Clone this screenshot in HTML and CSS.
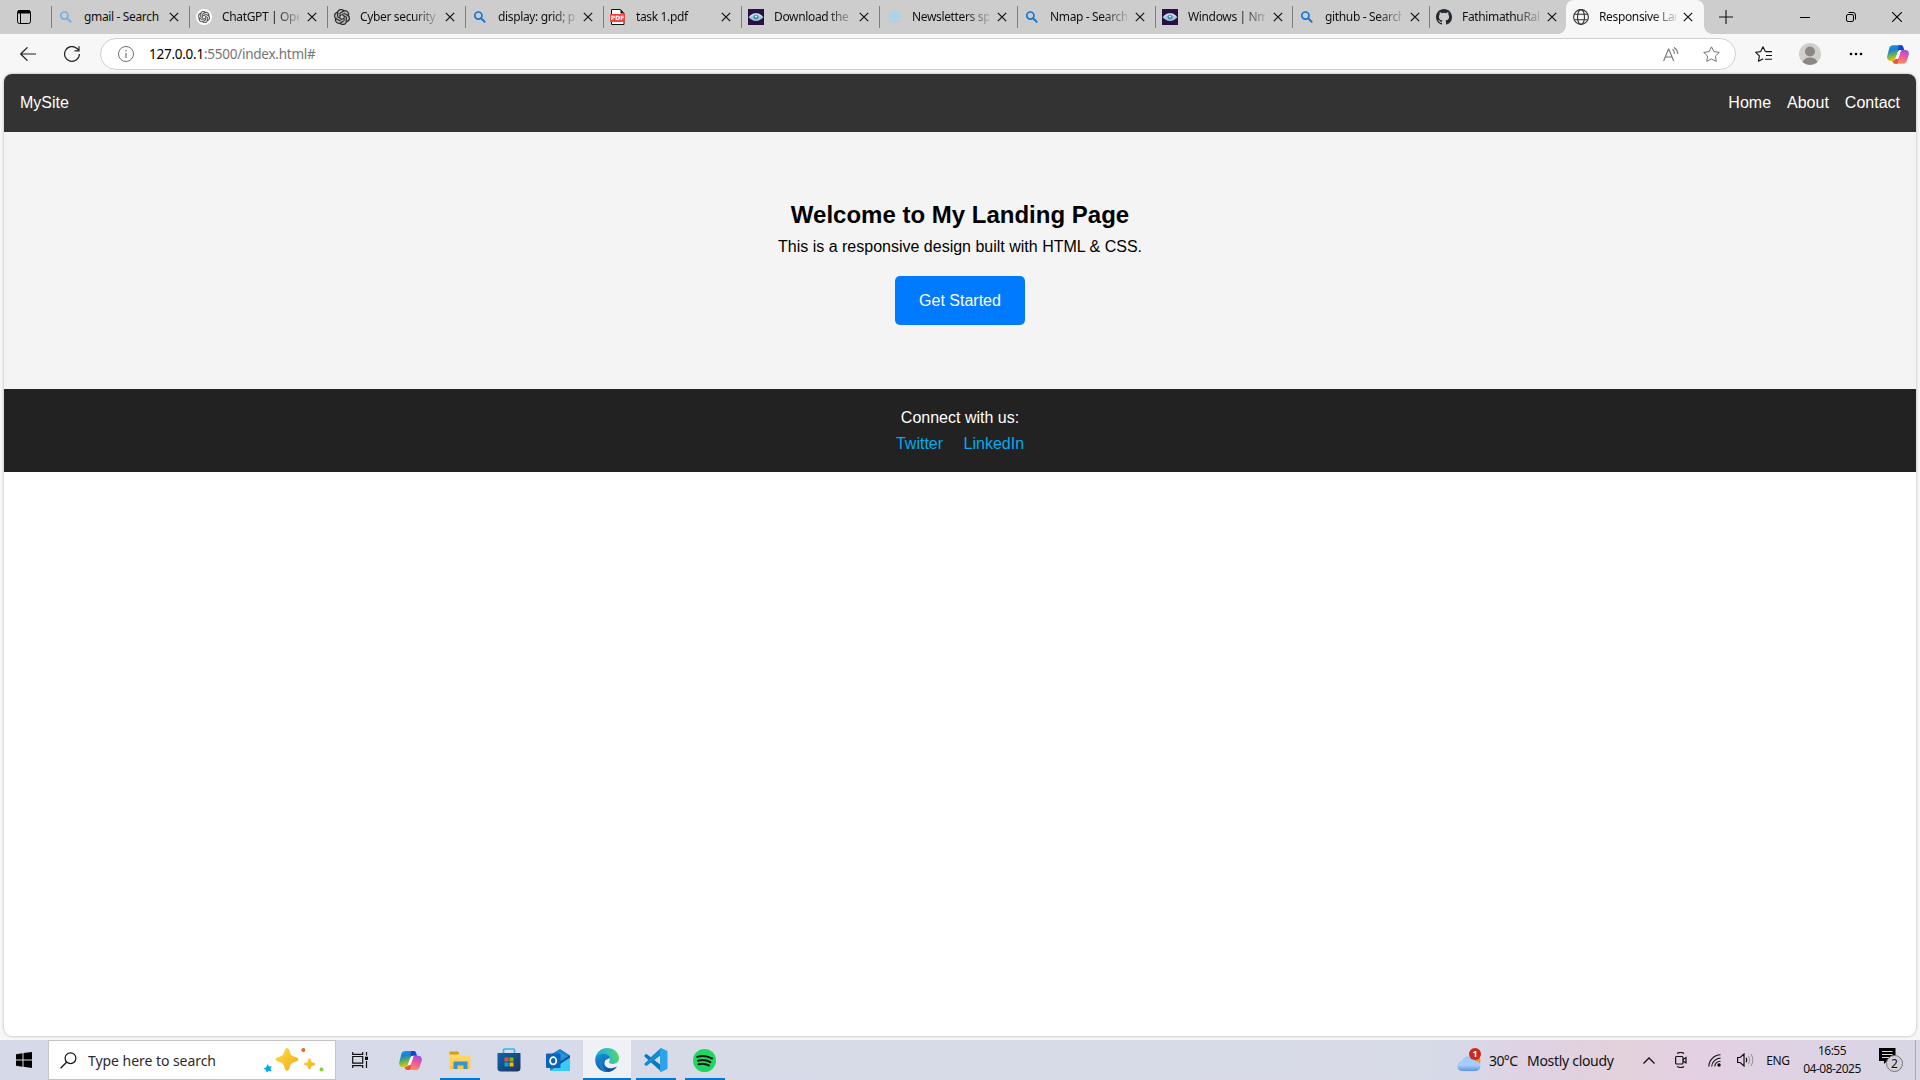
FILE: index.html
```html
<!DOCTYPE html>
<html lang="en">
<head>
<meta charset="utf-8">
<title>Responsive Landing Page</title>
<link rel="stylesheet" href="styles.css">
</head>
<body>
<svg class="defs" aria-hidden="true">
  <defs>
    <linearGradient id="cpA" x1="0" y1="0" x2=".3" y2="1"><stop offset="0" stop-color="#1b9df0"/><stop offset=".35" stop-color="#1a7fd0"/><stop offset=".65" stop-color="#5fb15a"/><stop offset="1" stop-color="#f2c800"/></linearGradient>
    <linearGradient id="cpB" x1=".7" y1="0" x2=".3" y2="1"><stop offset="0" stop-color="#a44bea"/><stop offset=".45" stop-color="#ee5a97"/><stop offset="1" stop-color="#ff9a50"/></linearGradient>
    <linearGradient id="fold" x1="0" y1="0" x2="0" y2="1"><stop offset="0" stop-color="#ffdc72"/><stop offset="1" stop-color="#fbc740"/></linearGradient>
    <linearGradient id="store" x1="0" y1="0" x2="1" y2="1"><stop offset="0" stop-color="#0d65b0"/><stop offset="1" stop-color="#1f3457"/></linearGradient>
    <linearGradient id="edgeA" x1="0" y1=".5" x2="1" y2=".3"><stop offset="0" stop-color="#22a5dc"/><stop offset=".6" stop-color="#35c3b5"/><stop offset="1" stop-color="#60d858"/></linearGradient>
    <linearGradient id="edgeB" x1="0" y1="0" x2=".6" y2="1"><stop offset="0" stop-color="#1b94dc"/><stop offset="1" stop-color="#0c51a0"/></linearGradient>
    <linearGradient id="cloud" x1="0" y1="0" x2="0" y2="1"><stop offset="0" stop-color="#9fc8fa"/><stop offset=".6" stop-color="#a9cefb"/><stop offset="1" stop-color="#5c94e6"/></linearGradient>
    <linearGradient id="gold" x1="0" y1="0" x2="1" y2="1"><stop offset="0" stop-color="#ffdc45"/><stop offset="1" stop-color="#f3ab16"/></linearGradient>
  </defs>
  <symbol id="search" viewBox="0 0 16 16"><circle cx="6.4" cy="6.6" r="3.6" fill="none" stroke="currentColor" stroke-width="1.7"/><path d="M9.2 9.4 12.6 12.8" stroke="currentColor" stroke-width="2" stroke-linecap="round"/></symbol>
  <symbol id="knot" viewBox="0 0 24 24"><path fill="currentColor" stroke="currentColor" stroke-width=".5" d="M22.2819 9.8211a5.9847 5.9847 0 0 0-.5157-4.9108 6.0462 6.0462 0 0 0-6.5098-2.9A6.0651 6.0651 0 0 0 4.9807 4.1818a5.9847 5.9847 0 0 0-3.9977 2.9 6.0462 6.0462 0 0 0 .7427 7.0966 5.98 5.98 0 0 0 .511 4.9107 6.051 6.051 0 0 0 6.5146 2.9001A5.9847 5.9847 0 0 0 13.2599 24a6.0557 6.0557 0 0 0 5.7718-4.2058 5.9894 5.9894 0 0 0 3.9977-2.9001 6.0557 6.0557 0 0 0-.7475-7.0729zm-9.022 12.6081a4.4755 4.4755 0 0 1-2.8764-1.0408l.1419-.0804 4.7783-2.7582a.7948.7948 0 0 0 .3927-.6813v-6.7369l2.02 1.1686a.071.071 0 0 1 .038.052v5.5826a4.504 4.504 0 0 1-4.4945 4.4944zm-9.6607-4.1254a4.4708 4.4708 0 0 1-.5346-3.0137l.142.0852 4.783 2.7582a.7712.7712 0 0 0 .7806 0l5.8428-3.3685v2.3324a.0804.0804 0 0 1-.0332.0615L9.74 19.9502a4.4992 4.4992 0 0 1-6.1408-1.6464zM2.3408 7.8956a4.485 4.485 0 0 1 2.3655-1.9728V11.6a.7664.7664 0 0 0 .3879.6765l5.8144 3.3543-2.0201 1.1685a.0757.0757 0 0 1-.071 0l-4.8303-2.7865A4.504 4.504 0 0 1 2.3408 7.872zm16.5963 3.8558L13.1038 8.364 15.1192 7.2a.0757.0757 0 0 1 .071 0l4.8303 2.7913a4.4944 4.4944 0 0 1-.6765 8.1042v-5.6772a.79.79 0 0 0-.407-.667zm2.0107-3.0231l-.142-.0852-4.7735-2.7818a.7759.7759 0 0 0-.7854 0L9.409 9.2297V6.8974a.0662.0662 0 0 1 .0284-.0615l4.8303-2.7866a4.4992 4.4992 0 0 1 6.6802 4.66zM8.3065 12.863l-2.02-1.1638a.0804.0804 0 0 1-.038-.0567V6.0742a4.4992 4.4992 0 0 1 7.3757-3.4537l-.142.0805L8.704 5.459a.7948.7948 0 0 0-.3927.6813zm1.0976-2.3654l2.602-1.4998 2.6069 1.4998v2.9994l-2.5974 1.4997-2.6067-1.4997Z"/></symbol>
  <symbol id="eye" viewBox="0 0 16 16"><path d="M0 0h16v16H0z" fill="#2a0f45"/><path d="M.5 8.300Q4 4 8 4t7.500 4.300Q12 12 8 12T.5 8.300z" fill="#9cc8da"/><path d="M2 7.500Q8 3 14 7.500" fill="none" stroke="#d6eef5"/><circle cx="8" cy="8" r="2.500" fill="#4b8aa4"/><circle cx="8" cy="7.600" r="1" fill="#e5f7fb"/></symbol>
  <symbol id="wheel" viewBox="0 0 16 16"><g fill="none" stroke="#a4d2ee" stroke-width="1.100"><circle cx="8" cy="8" r="5"/><circle cx="8" cy="8" r="1.800"/><path d="M8 .5v15M.5 8h15M2.700 2.700l10.600 10.600M13.300 2.700 2.700 13.300"/></g></symbol>
  <symbol id="github" viewBox="0 0 16 16"><path fill="#24292f" d="M8 0C3.58 0 0 3.58 0 8c0 3.54 2.29 6.53 5.47 7.59.4.07.55-.17.55-.38 0-.19-.01-.82-.01-1.49-2.01.37-2.53-.49-2.69-.94-.09-.23-.48-.94-.82-1.13-.28-.15-.68-.52-.01-.53.63-.01 1.08.58 1.23.82.72 1.21 1.87.87 2.33.66.07-.52.28-.87.51-1.07-1.78-.2-3.64-.89-3.64-3.95 0-.87.31-1.59.82-2.15-.08-.2-.36-1.02.08-2.12 0 0 .67-.21 2.2.82a7.6 7.6 0 0 1 4 0c1.53-1.04 2.2-.82 2.2-.82.44 1.1.16 1.92.08 2.12.51.56.82 1.27.82 2.15 0 3.07-1.87 3.75-3.65 3.95.29.25.54.73.54 1.48 0 1.07-.01 1.93-.01 2.2 0 .21.15.46.55.38A8.01 8.01 0 0 0 16 8c0-4.42-3.58-8-8-8z"/></symbol>
  <symbol id="globe" viewBox="0 0 16 16"><g fill="none" stroke="#333" stroke-width="1.1"><circle cx="8" cy="8" r="7.4"/><ellipse cx="8" cy="8" rx="3.5" ry="7.4"/><path d="M1.2 5.3h13.6M1.2 10.7h13.6"/></g></symbol>
  <symbol id="x" viewBox="0 0 10 10"><path d="M.8.8l8.400 8.400M9.200.8.8 9.200" stroke="#111" stroke-width="1.200"/></symbol>
  <symbol id="copilot" viewBox="0 0 24 22">
    <path d="M6.500 1h8.800c1.400 0 2 .9 2.400 2l1 3h-3.900c-1.600 0-2.400.7-3 2.400L9 16c-.6 1.500-1.400 2-2.800 2H4c-2.800 0-4.300-2-3.800-5L2.500 4C3.100 2 4.400 1 6.500 1z" fill="url(#cpA)"/>
    <path d="M12.500 1h2.800c1.400 0 2 .9 2.400 2l1 3h-3.900c-1.600 0-2.400.7-3 2.400z" fill="#1148c4"/>
    <path d="M17.500 21H8.700c-1.400 0-2-.9-2.400-2l-.5-1c2 0 3-.5 3.500-2h1c1 0 2-.8 2.500-2.400L15.300 6H20c2.800 0 4.300 2 3.800 5l-2.300 7c-.6 2-1.900 3-4 3z" fill="url(#cpB)"/>
    <path d="M11.500 21H8.700c-1.400 0-2-.9-2.400-2l-.5-1c2 0 3-.5 3.500-2h3.700z" fill="#ee5340"/>
    <path d="M11.800 8.400c.6-1.700 1.400-2.400 3-2.400h.5l-2.500 7.600c-.5 1.600-1.500 2.400-2.500 2.400H9z" fill="#fff" fill-opacity=".9"/>
  </symbol>
</svg>

<div class="browser">
  <div class="tabbar">
    <div class="workspace"><svg width="14" height="14" viewBox="0 0 14 14"><rect x=".5" y=".5" width="13" height="13" rx="2" fill="none" stroke="#000"/><path d="M1 .5h12v3H1z"/><path d="M3.500 3v10.500" stroke="#000"/></svg></div>
    <div class="tab"><svg class="fav pale"><use href="#search"/></svg><span class="title">gmail - Search</span><svg class="close"><use href="#x"/></svg></div>
    <div class="tab"><span class="fav disc"><svg width="12" height="12"><use href="#knot"/></svg></span><span class="title">ChatGPT | OpenAI</span><svg class="close"><use href="#x"/></svg></div>
    <div class="tab"><svg class="fav dark"><use href="#knot"/></svg><span class="title">Cyber security</span><svg class="close"><use href="#x"/></svg></div>
    <div class="tab"><svg class="fav blue"><use href="#search"/></svg><span class="title">display: grid; place</span><svg class="close"><use href="#x"/></svg></div>
    <div class="tab"><svg class="fav" viewBox="0 0 16 16"><path d="M1.500.5h9l3.500 4v11H1.500z" fill="#fff" stroke="#111"/><path d="M10.500.5v4H14z" fill="#111"/><path d="M0 5h15v8H0z" fill="#f8403f"/><text x="7.500" y="11.200" text-anchor="middle" class="pdf-text">PDF</text></svg><span class="title">task 1.pdf</span><svg class="close"><use href="#x"/></svg></div>
    <div class="tab"><svg class="fav"><use href="#eye"/></svg><span class="title">Download the F</span><svg class="close"><use href="#x"/></svg></div>
    <div class="tab"><svg class="fav"><use href="#wheel"/></svg><span class="title">Newsletters spam</span><svg class="close"><use href="#x"/></svg></div>
    <div class="tab"><svg class="fav blue"><use href="#search"/></svg><span class="title">Nmap - Search</span><svg class="close"><use href="#x"/></svg></div>
    <div class="tab narrow"><svg class="fav"><use href="#eye"/></svg><span class="title">Windows | Nmap</span><svg class="close"><use href="#x"/></svg></div>
    <div class="tab narrow"><svg class="fav blue"><use href="#search"/></svg><span class="title">github - Search</span><svg class="close"><use href="#x"/></svg></div>
    <div class="tab narrow"><svg class="fav"><use href="#github"/></svg><span class="title">FathimathuRahman</span><svg class="close"><use href="#x"/></svg></div>
    <div class="tab active"><svg class="fav"><use href="#globe"/></svg><span class="title">Responsive Landing</span><svg class="close"><use href="#x"/></svg></div>
    <div class="newtab"><svg width="14" height="14" viewBox="0 0 14 14"><path d="M7 0v14M0 7h14" stroke="#111" stroke-width="1.1"/></svg></div>
    <div class="controls">
      <span><svg width="10" height="10"><path d="M0 5.500h10" stroke="#000"/></svg></span>
      <span><svg width="10" height="10" viewBox="0 0 10 10"><g fill="none" stroke="#000"><rect x=".5" y="2.500" width="7" height="7" rx="1.500"/><path d="M2.500.5H7A2.500 2.500 0 0 1 9.500 3v4.500"/></g></svg></span>
      <span><svg width="10" height="10" viewBox="0 0 10 10"><path d="M0 0l10 10M10 0 0 10" stroke="#000" stroke-width="1.100"/></svg></span>
    </div>
  </div>

  <div class="toolbar">
    <svg class="back" width="16" height="14" viewBox="0 0 16 14"><path d="M16 7H1M7.500.3.700 7l6.800 6.700" fill="none" stroke="#222" stroke-width="1.200"/></svg>
    <svg class="reload" width="16" height="16" viewBox="0 0 16 16"><path d="M15.400 8A7.400 7.400 0 1 1 13 2.500L14.700 4.200M15 .3v4.500h-4.500" fill="none" stroke="#222" stroke-width="1.200"/></svg>
    <div class="address">
      <svg width="16" height="16" viewBox="0 0 16 16"><circle cx="8" cy="8" r="7.500" fill="none" stroke="#707070"/><path d="M8 7v5" stroke="#707070" stroke-width="1.200"/><circle cx="8" cy="4.700" r=".8" fill="#707070"/></svg>
      <span class="url"><b>127.0.0.1</b>:5500/index.html#</span>
      <svg class="aloud" width="16" height="15" viewBox="0 0 16 15"><path d="M.6 14 5.500 2h.3l4.900 12M2.300 10h6.700M9.500 2.200a6 6 0 0 1 2 4.500M11 .5a8.500 8.500 0 0 1 3.800 6.500" fill="none" stroke="#737373" stroke-width="1.100"/></svg>
      <svg class="star" width="17" height="16" viewBox="0 0 17 16"><path d="M8.500.8 10.900 5.600l5.400.8-3.900 3.700.9 5.300-4.800-2.500-4.800 2.500.9-5.300L.7 6.400l5.400-.8z" fill="none" stroke="#737373" stroke-linejoin="round"/></svg>
    </div>
    <div class="tool favs"><svg width="17" height="16" viewBox="0 0 17 16"><path d="M10.300 5.600 8 .8 5.700 5.600l-5 .7 3.700 3.600-.9 5.300 4.700-2.500M10.300 5.600H17M11 9.500h6M10 13.300h7" fill="none" stroke="#111" stroke-width="1.100" stroke-linejoin="round"/></svg></div>
    <div class="tool"><svg width="22" height="22" viewBox="0 0 22 22"><circle cx="11" cy="11" r="11" fill="#d1cfcb"/><circle cx="11" cy="8.500" r="5" fill="#8a8784"/><path d="M3.700 19.200q1.300-4.700 7.300-4.700t7.300 4.700Q15 22 11 22t-7.300-2.800z" fill="#8a8784"/></svg></div>
    <div class="tool"><svg width="14" height="4"><circle cx="2" cy="2" r="1.300"/><circle cx="7" cy="2" r="1.300"/><circle cx="12" cy="2" r="1.300"/></svg></div>
    <div class="tool last"><svg width="22" height="21"><use href="#copilot"/></svg></div>
  </div>

  <div class="page">
    <header class="site-header"><span>MySite</span><nav><a>Home</a><a>About</a><a>Contact</a></nav></header>
    <section class="hero"><h1>Welcome to My Landing Page</h1><p>This is a responsive design built with HTML &amp; CSS.</p><a class="btn">Get Started</a></section>
    <footer class="site-footer"><p>Connect with us:</p><div><a>Twitter</a> <a>LinkedIn</a></div></footer>
  </div>
</div>

<div class="taskbar">
  <div class="app"><svg width="16" height="16" viewBox="0 0 16 16"><path d="M0 2.300 6.500 1.300v6.200H0zM7.500 1.100 16 0v7.500H7.500zM0 8.500h6.500v6.200l-6.500-1zM7.500 8.500H16V16l-8.500-1.200z"/></svg></div>
  <div class="searchbox">
    <svg width="17" height="17" viewBox="0 0 17 17"><circle cx="10.500" cy="6.200" r="5.400" fill="none" stroke="#111" stroke-width="1.200"/><path d="M6.500 10.200.6 16.200" stroke="#111" stroke-width="1.300"/></svg>
    <span>Type here to search</span>
    <svg class="sparkles" width="62" height="26" viewBox="0 0 62 26"><path d="M24 1c1.500 0 2 1.500 3 4.500 1 2.800 1.500 3.300 4.500 4.200 2.500.8 4 1.300 4 2.600s-1.500 1.900-4 2.700c-3 .9-3.500 1.500-4.500 4.200-1 3-1.500 4.500-3 4.500s-2-1.500-3-4.500c-1-2.700-1.500-3.300-4.500-4.200-2.500-.8-4-1.400-4-2.700s1.500-1.800 4-2.600c3-.9 3.500-1.400 4.500-4.200 1-3 1.500-4.500 3-4.500z" fill="url(#gold)"/><path d="M46.500 11c1.200 0 1.500 3.300 2.300 3.900s3.500.9 3.500 2-2.700 1.500-3.500 2.200c-.8.700-1.100 3.400-2.300 3.400s-1.500-2.700-2.300-3.400-3.500-1.100-3.500-2.200 2.700-1.400 3.500-2 1.100-3.900 2.300-3.900z" fill="url(#gold)"/><path d="M4.500 17l1.500 2.400 2.800-.2-1.200 2.500.8 2.600-2.900-.4L3.700 25.500l-.8-2.600L.5 21.300l2.600-.9z" fill="#08a5f4"/><circle cx="40.300" cy="3" r="2" fill="#f0612b"/><circle cx="58.500" cy="22.500" r="2" fill="#8bcb3c"/></svg>
  </div>
  <div class="app"><svg width="16" height="16" viewBox="0 0 16 16"><g fill="none" stroke="#111" stroke-width="1.200"><path d="M.7 0v2.300h10V0M.7 16v-2.300h10V16M.7 4.500h10v6.600H.7zM14.500 0v3.500M14.500 9v7"/></g><path d="M13 4.700h3v3.200h-3z"/></svg></div>
  <div class="apps">
    <div class="app"><svg width="23" height="21"><use href="#copilot"/></svg></div>
    <div class="app running"><svg width="22" height="19" viewBox="0 0 22 19"><path d="M.5 1.500h10v3h11V18H.5z" fill="url(#fold)"/><path d="M.5.5h8.500l1 1v1.500L8.500 3.500H.5z" fill="#d79a12"/><path d="M4.500 18v-7.500h14V18h-4v-3.500h-6V18z" fill="#3b92d0"/></svg></div>
    <div class="app"><svg width="24" height="24" viewBox="0 0 24 24"><path d="M6.500 5V2Q6.500 1 7.500 1h9q1 0 1 1v3" fill="none" stroke="#35b7ee" stroke-width="1.700"/><path d="M.5 5h23v15q0 3.500-3.500 3.500H4Q.5 23.500.5 20z" fill="url(#store)"/><path d="M7.500 9.500h4v4h-4z" fill="#f25022"/><path d="M12.500 9.500h4v4h-4z" fill="#7fba00"/><path d="M7.500 14.500h4v4h-4z" fill="#00a4ef"/><path d="M12.500 14.500h4v4h-4z" fill="#ffb900"/></svg></div>
    <div class="app"><svg width="24" height="22" viewBox="0 0 24 22"><path d="M4 6 14 0l10 6.500V20q0 2-2 2H6q-2 0-2-2z" fill="#1581d2"/><path d="M9 6 14 3l8 4.500-8 6z" fill="#2b93dd"/><path d="M4 22 24 8v12q0 2-2 2z" fill="#38cbf6"/><path d="M14 15 24 8.500V6.500l-10 6z" fill="#0b4b8c"/><rect y="4.500" width="14.500" height="14.500" rx="1" fill="#0d63b9"/><ellipse cx="7.200" cy="11.800" rx="3.100" ry="3.600" fill="none" stroke="#fff" stroke-width="1.800"/></svg></div>
    <div class="app running current"><svg width="24" height="24" viewBox="0 0 24 24"><path d="M.3 10.500C1.200 4.500 6 0 12 0c7 0 12 4.800 12 10 0 4-3 6-6 6-3.300 0-4.500-1.300-4-2.200 1.200-1.600.5-5.800-4-5.800-4.300 0-8 1.500-9.700 2.500z" fill="url(#edgeA)"/><path d="M.2 12C.2 8.500 4 5.800 8.500 5.800c4 0 6.500 2.500 6.500 5 0 1.500-.8 2.500-1 3-3-2-5 0-4.500 2.500.6 3.700 6 5.600 12.500 2.200C20 22 16 24 12 24 5.500 24 .2 18.700.2 12z" fill="url(#edgeB)"/><path d="M9 10c-3.500 4-1.500 11.500 4 13.900C8 24.500 5 21 4.500 17.500 4 13.500 6 10.500 9 10z" fill="#1480cc"/><path d="M14.500 10c.8 1.500.2 3-.5 3.900-.5.900.7 2.100 4 2.100 1 0 2-.2 3-.8-1.500 2.700-4 3.800-6.700 3.300C11 18 9.500 15.500 10 12.500z" fill="#eff1f7"/></svg></div>
    <div class="app running"><svg width="24" height="24" viewBox="0 0 24 24"><path d="M17 0 6.700 9.300 2.500 6 .5 7v1.400L17 23.500V17L7.500 10z" fill="#0878b8"/><path d="M17 0v7L2.500 18 .5 17v-1.500z" fill="#168bd0"/><path d="M17 0l6.500 3v18L17 24q-1 0-1-1.500v-21Q16 0 17 0z" fill="#29a5ee"/></svg></div>
    <div class="app running"><svg width="23" height="23" viewBox="0 0 24 24"><circle cx="12" cy="12" r="12" fill="#1ed760"/><path d="M4.500 8.200q8-2.200 15.200 1.700M5.200 12.200q6.800-1.900 12.900 1.500M5.800 15.900q5.800-1.600 10.700 1.300" fill="none" stroke="#111" stroke-width="2.100" stroke-linecap="round"/></svg></div>
  </div>
  <div class="tray">
    <svg class="weather" width="25" height="24" viewBox="0 0 25 24"><circle cx="17.500" cy="12.500" r="6" fill="#f29318"/><path d="M5.500 23a5 5 0 0 1-.4-10A6.800 6.800 0 0 1 18 13a5 5 0 0 1 1 10z" fill="url(#cloud)"/><circle cx="18" cy="6" r="6" fill="#c92a1d"/><text x="18" y="9.400" text-anchor="middle" class="alert">1</text></svg>
    <span class="temp">30°C</span><span class="sky">Mostly cloudy</span>
    <span class="cell chev"><svg width="12" height="7"><path d="M.5 6.500 6 1l5.500 5.500" fill="none" stroke="#111" stroke-width="1.300"/></svg></span>
    <span class="cell cam"><svg width="12" height="16" viewBox="0 0 12 16"><g fill="none" stroke="#111" stroke-width="1.200"><rect x=".6" y="4.500" width="7.400" height="7.500" rx="1"/><path d="M8 7.500l3-2v5.500l-3-2M2 1.500Q6-.5 9 1.500M2 14.500q4 2 7 0"/></g></svg></span>
    <span class="cell wifi"><svg width="13" height="13" viewBox="0 0 13 13"><g fill="none" stroke="#111" stroke-width="1.100"><path d="M.8 12.500A12 12 0 0 1 12.500.8M3.700 12.500a9 9 0 0 1 8.800-8.400M6.700 12.500a6 6 0 0 1 5.800-5.200"/></g><circle cx="11" cy="11" r="1.700"/></svg></span>
    <span class="cell vol"><svg width="17" height="14" viewBox="0 0 17 14"><path d="M.6 4.500h2.500L7 1v12L3.100 9.500H.6zM9 4.700q1.400 2.300 0 4.600" fill="none" stroke="#111" stroke-width="1.200"/><path d="M11.500 2.700q2.700 4.300 0 8.600M14 1q3.700 6 0 12" fill="none" stroke="#948c98"/></svg></span>
    <span class="cell lang">ENG</span>
    <span class="cell clock"><span>16:55</span><span>04-08-2025</span></span>
    <span class="cell notif"><svg width="25" height="25" viewBox="0 0 25 25"><path d="M0 0h16.500v13H8l-3 3v-3H0z"/><path d="M3 3.500h10.500M3 6.500h10.500M3 9.500h7" stroke="#ddd5e3"/><circle cx="15.500" cy="15.500" r="8" fill="#d3d1d5" stroke="#77747a"/><text x="15.500" y="20" text-anchor="middle" class="count">2</text></svg></span>
  </div>
</div>
</body>
</html>
```

FILE: styles.css
```css
* { box-sizing: border-box; margin: 0; padding: 0; }
body { width: 1920px; height: 1080px; overflow: hidden; display: flex; flex-direction: column; background: #f7f7f7; font-family: "Noto Sans", "Open Sans", sans-serif; color: #111; }
svg { display: block; flex: none; }
.defs { position: absolute; width: 0; height: 0; }
.browser { height: 1040px; display: flex; flex-direction: column; }

.tabbar { height: 34px; display: flex; background: #cdcdcd; }
.workspace { width: 51px; display: flex; align-items: center; padding-left: 17px; }
.tab { width: 138px; display: flex; align-items: center; padding-left: 6px; border-left: 1px solid transparent; border-image: linear-gradient(transparent 7px, #7d7d7d 7px, #7d7d7d 27px, transparent 27px) 1; }
.tab.narrow { width: 137px; }
.tab.active { position: relative; width: 138px; border: 0; padding-left: 7px; background: #f7f7f7; border-radius: 8px 8px 0 0; }
.tab.active::before, .tab.active::after { content: ""; position: absolute; bottom: 0; width: 8px; height: 8px; }
.tab.active::before { left: -8px; background: radial-gradient(circle at 0 0, transparent 7.5px, #f7f7f7 8px); }
.tab.active::after { right: -8px; background: radial-gradient(circle at 100% 0, transparent 7.5px, #f7f7f7 8px); }
.fav { width: 16px; height: 16px; flex: none; }
.pale { color: #75aee0; }
.blue { color: #1677d2; }
.dark { color: #2b2b2b; }
.disc { display: flex; align-items: center; justify-content: center; border-radius: 50%; background: #fff; color: #444; }
.title { width: 77px; margin-left: 10px; font-size: 12px; letter-spacing: -.35px; line-height: 18px; white-space: nowrap; overflow: hidden; -webkit-mask-image: linear-gradient(90deg, #000 53px, transparent 82px); mask-image: linear-gradient(90deg, #000 53px, transparent 82px); }
.tab:nth-child(2) .title { -webkit-mask-image: none; mask-image: none; }
.close { width: 10px; height: 10px; margin-left: 8px; }
.tab.active .close { margin-left: 7px; }
.newtab { display: flex; align-items: center; padding-left: 14.500px; }
.controls { margin-left: auto; display: flex; }
.controls span { width: 46px; display: flex; align-items: center; justify-content: center; }

.toolbar { height: 40px; display: flex; align-items: center; }
.back { margin-left: 20px; }
.reload { margin-left: 28px; }
.address { width: 1636px; height: 32px; margin-left: 20px; padding: 0 15px 0 17px; display: flex; align-items: center; background: #fff; border: 1px solid #cfcfcf; border-radius: 16px; }
.url { margin-left: 15px; font-size: 13.5px; letter-spacing: -.25px; color: #757575; white-space: nowrap; }
.url b { font-weight: 400; color: #000; }
.aloud { margin-left: auto; }
.star { margin-left: 24px; }
.tool { width: 46px; display: flex; justify-content: center; }
.favs { margin-left: 4px; }
.favs + .tool { margin-left: 1px; }
.last { width: 38px; }

.page { height: 962px; margin: 0 4px; background: #fff; border-radius: 8px; overflow: hidden; box-shadow: 0 0 2px 1px #d0d0d0; font: 16px/1.6 "Liberation Sans", Arial, sans-serif; color: #000; }
.site-header { display: flex; justify-content: space-between; padding: 16px; background: #333; color: #fff; }
.site-header nav { display: flex; gap: 16px; }
.hero { padding: 64px 16px; text-align: center; background: #f4f4f4; }
.hero h1 { font-size: 24px; }
.btn { display: block; width: fit-content; margin: 16px auto 0; padding: 12px 24px; border-radius: 5px; background: #007bff; color: #fff; }
.site-footer { padding: 16px; text-align: center; background: #222; color: #fff; }
.site-footer a { margin: 0 8px; color: #00acee; }

.taskbar { height: 40px; display: flex; background: linear-gradient(90deg, #d6d9e8 0, #d8dbe7 1380px, #d6dae8 1450px, #dfd2e3 1530px, #e3d1dc 1620px, #e4d0e2 1690px, #dcd3e4 1830px, #d7d6e5 1920px); }
.app { width: 48px; height: 40px; display: flex; align-items: center; justify-content: center; }
.searchbox { width: 288px; display: flex; align-items: center; padding: 0 10px 0 11px; background: #fff; border: 1px solid #c4c4c4; }
.searchbox span { margin-left: 11px; font-size: 14px; letter-spacing: -.05px; color: #2b2b2b; white-space: nowrap; }
.sparkles { margin-left: auto; }
.apps { display: flex; gap: 1px; margin-left: 2.500px; }
.running { background: linear-gradient(#0078d7, #0078d7) center bottom / 40px 2px no-repeat; }
.current { background: linear-gradient(#0078d7, #0078d7) center bottom / 48px 2px no-repeat #eff1f7; }
.tray { width: 462px; margin-left: auto; margin-right: 4px; padding-left: 3px; display: flex; align-items: center; font-size: 14px; white-space: nowrap; border-right: 1px solid #aaa6b3; }
.temp { width: 38px; margin-left: 7px; letter-spacing: -.6px; }
.sky { width: 107px; letter-spacing: -.3px; }
.cell { display: flex; align-items: center; justify-content: center; flex: none; }
.chev { width: 30px; }
.cam { width: 34px; }
.wifi { width: 32px; }
.vol { width: 30px; }
.lang { width: 36px; font-size: 12px; letter-spacing: -.3px; }
.clock { width: 72px; flex-direction: column; font-size: 12px; line-height: 18px; letter-spacing: -.5px; }
.notif { width: 46px; }
.alert { font: 700 9px "Noto Sans", sans-serif; fill: #fff; }
.count { font: 12px "Noto Sans", sans-serif; fill: #111; }
.pdf-text { font: 700 6px "DejaVu Sans", sans-serif; fill: #fff; }
```
